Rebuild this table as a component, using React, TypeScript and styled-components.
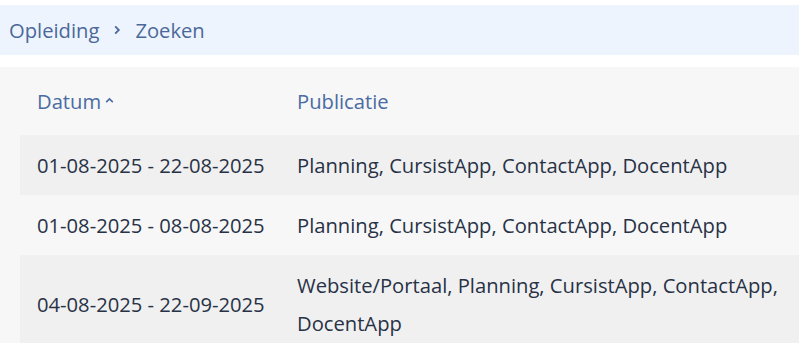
import React from "react";
import styled, { createGlobalStyle } from "styled-components";

const Global = createGlobalStyle`
  html, body { margin: 0; padding: 0; background: #ffffff; }
  body { font-family: "Open Sans", "Noto Sans", sans-serif; }
`;

const Page = styled.div`
  width: 799px;
  height: 343px;
  overflow: hidden;
  background: #ffffff;
  padding-top: 5px;
  box-sizing: border-box;
`;

const Breadcrumb = styled.nav`
  height: 50px;
  background: #eef4fd;
  display: flex;
  align-items: center;
  padding-left: 9px;
  gap: 12px;
  font-size: 20.2px;
  color: #4b689a;
`;

const Crumb = styled.span`
  line-height: 1;
`;

const Content = styled.div`
  margin-top: 12px;
  background: #f7f7f7;
  padding-left: 20px;
  height: 400px;
`;

const Row = styled.div<{ $striped?: boolean; $header?: boolean }>`
  display: grid;
  grid-template-columns: 260px 1fr;
  align-items: center;
  background: ${(p) => (p.$striped ? "#f0f0f0" : "transparent")};
  min-height: ${(p) => (p.$header ? "68px" : "60px")};
`;

const Cell = styled.div<{ $header?: boolean; $nowrap?: boolean }>`
  padding: 11px 0 11px 17px;
  font-size: 20.2px;
  line-height: 38px;
  white-space: ${(p) => (p.$nowrap ? "nowrap" : "normal")};
  color: ${(p) => (p.$header ? "#4a6ba3" : "#283246")};
`;

const Chevron = ({ dir, size }: { dir: "up" | "right"; size: number }) => (
  <svg width={size} height={size} viewBox="0 0 10 10" style={{ display: "block" }}>
    {dir === "up" ? (
      <polyline points="2,6.5 5,3.5 8,6.5" fill="none" stroke="currentColor" strokeWidth="1.4" />
    ) : (
      <polyline points="3.5,2 6.5,5 3.5,8" fill="none" stroke="currentColor" strokeWidth="1.5" />
    )}
  </svg>
);

const SortIcon = styled.span`
  display: inline-block;
  margin-left: 3px;
  position: relative;
  top: -3px;
  height: 11px;
  line-height: 0;
  vertical-align: middle;
`;

const rows = [
  { date: "01-08-2025 - 22-08-2025", pub: "Planning, CursistApp, ContactApp, DocentApp" },
  { date: "01-08-2025 - 08-08-2025", pub: "Planning, CursistApp, ContactApp, DocentApp" },
  {
    date: "04-08-2025 - 22-09-2025",
    pub: "Website/Portaal, Planning, CursistApp, ContactApp, DocentApp",
  },
];

const Wrap = styled.div`
  max-width: 495px;
`;

export default function App() {
  return (
    <Page>
      <Global />
      <Breadcrumb>
        <Crumb>Opleiding</Crumb>
        <Chevron dir="right" size={12} />
        <Crumb>Zoeken</Crumb>
      </Breadcrumb>
      <Content>
        <Row $header>
          <Cell $header $nowrap>
            Datum
            <SortIcon>
              <Chevron dir="up" size={11} />
            </SortIcon>
          </Cell>
          <Cell $header>Publicatie</Cell>
        </Row>
        {rows.map((r, i) => (
          <Row key={i} $striped={i % 2 === 0}>
            <Cell $nowrap>{r.date}</Cell>
            <Cell>
              <Wrap>{r.pub}</Wrap>
            </Cell>
          </Row>
        ))}
      </Content>
    </Page>
  );
}
